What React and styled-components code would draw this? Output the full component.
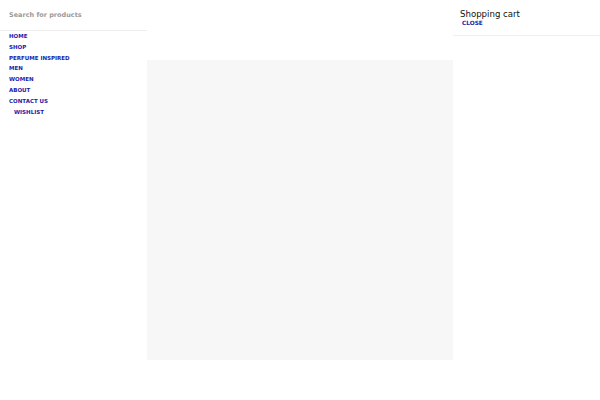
import React from "react";
import styled, { createGlobalStyle } from "styled-components";

const Global = createGlobalStyle`
  html, body { margin: 0; padding: 0; background: #fff; }
  body { font-family: "DejaVu Sans", sans-serif; }
`;

const Page = styled.div`
  display: grid;
  grid-template-columns: 147px 306px 147px;
  width: 600px;
  height: 400px;
`;

const Sidebar = styled.aside`
  display: flex;
  flex-direction: column;
`;

const Search = styled.input`
  box-sizing: border-box;
  width: 147px;
  height: 31px;
  border: none;
  border-bottom: 1px solid #eeeeee;
  padding: 0 0 0 9px;
  font-family: "DejaVu Sans", sans-serif;
  font-size: 6.5px;
  font-weight: bold;
  outline: none;
  background: transparent;
  &::placeholder { color: #9a9a9a; }
`;

const Nav = styled.nav`
  display: flex;
  flex-direction: column;
  padding-top: 0;
`;

const NavLink = styled.a`
  display: block;
  height: 10.8px;
  line-height: 10.8px;
  padding-left: ${(p) => (p.$indent ? 14 : 9)}px;
  font-size: 5.5px;
  font-weight: bold;
  color: #1d1aa8;
  text-decoration: none;
  text-transform: uppercase;
`;

const Main = styled.main`
  padding-top: 60px;
`;

const Placeholder = styled.div`
  height: 300px;
  background: #f7f7f7;
`;

const Cart = styled.aside`
  display: flex;
  flex-direction: column;
`;

const CartHeader = styled.div`
  display: flex;
  flex-direction: column;
  padding: 9px 0 0 7px;
  height: 36px;
  box-sizing: border-box;
  border-bottom: 1px solid #eeeeee;
`;

const CartTitle = styled.div`
  font-size: 8.6px;
  line-height: 10px;
  color: #111;
`;

const Close = styled.a`
  font-size: 5.8px;
  font-weight: bold;
  color: #1d1aa8;
  line-height: 8px;
  padding-left: 2px;
  text-decoration: none;
  text-transform: uppercase;
`;

const links = ["Home", "Shop", "Perfume Inspired", "Men", "Women", "About", "Contact Us"];

export default function App() {
  return (
    <>
      <Global />
      <Page>
        <Sidebar>
          <Search placeholder="Search for products" />
          <Nav>
            {links.map((l) => (
              <NavLink key={l} href="#">{l}</NavLink>
            ))}
            <NavLink $indent href="#">Wishlist</NavLink>
          </Nav>
        </Sidebar>
        <Main>
          <Placeholder />
        </Main>
        <Cart>
          <CartHeader>
            <CartTitle>Shopping cart</CartTitle>
            <Close href="#">Close</Close>
          </CartHeader>
        </Cart>
      </Page>
    </>
  );
}
